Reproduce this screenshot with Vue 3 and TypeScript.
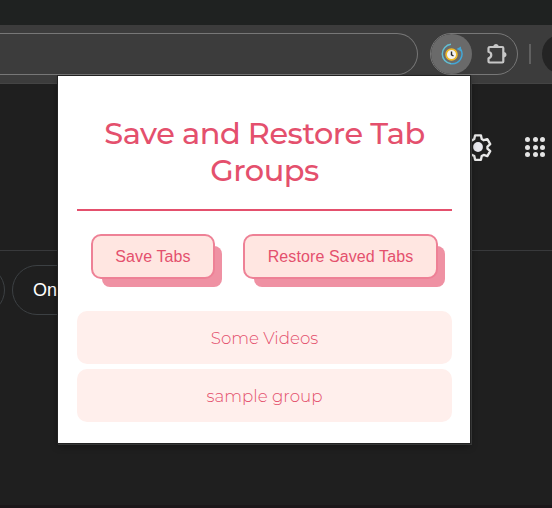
<script setup lang="ts">
import { ref } from 'vue'

const titleLines = ['Save and Restore Tab', 'Groups']
const groups = ref<string[]>(['Some Videos', 'sample group'])
const dots = [0, 1, 2, 3, 4, 5, 6, 7, 8]
</script>

<template>
  <div class="browser">
    <div class="tab-strip"></div>
    <div class="toolbar">
      <div class="address"></div>
      <div class="extensions">
        <div class="ext-active">
          <svg width="24" height="24" viewBox="0 0 24 24">
            <path d="M11 2.300A9.700 9.700 0 0 0 2.300 12C2.300 17 6 21 11 21.700" fill="none" stroke="#62bfd3" stroke-width="1.500" />
            <path d="M11 21.700A9.700 9.700 0 0 0 20.500 7" fill="none" stroke="#43a7d6" stroke-width="1.500" />
            <path d="M16.500 7l4.500-2.600v4.800z" fill="#43a7d6" />
            <circle cx="11.500" cy="12.500" r="5.400" fill="#f3f3f3" stroke="#edb928" stroke-width="1.700" />
            <path d="M11.500 9.500v3.300l2 1.200" fill="none" stroke="#252525" stroke-width="1.400" />
          </svg>
        </div>
        <svg class="puzzle" width="24" height="24" viewBox="0 0 24 24">
          <path d="M5 5H17.300Q18.300 5 18.300 6V19.500Q18.300 20.500 17.300 20.500H4.500Q3.500 20.500 3.500 19.500V16.200C7.200 15.200 7.200 10.800 3.500 9.800V6Q3.500 5 5 5Z" fill="none" stroke="#c7c7c7" stroke-width="2.200" stroke-linejoin="round" />
          <path d="M8.300 4.500C8.300 1 13.700 1 13.700 4.500M18.500 10C22.500 10 22.500 15.400 18.500 15.400" fill="#c7c7c7" />
        </svg>
      </div>
      <div class="divider"></div>
      <div class="avatar"></div>
    </div>
    <div class="page">
      <div class="page-head">
        <svg class="gear" width="28" height="28" viewBox="0 0 24 24">
          <path d="M9.500 2h5l.7 3.200 1.700 1 3.100-1 2.500 4.300-2.400 2.100v1.800l2.400 2.100-2.500 4.300-3.100-1-1.700 1-.7 3.200h-5l-.7-3.200-1.700-1-3.100 1-2.500-4.300 2.400-2.100v-1.800L1.500 9.500 4 5.200l3.100 1 1.700-1z" fill="none" stroke="#e8e8e8" stroke-width="2" stroke-linejoin="round" />
          <circle cx="12" cy="12" r="4.200" fill="#e8e8ee" />
        </svg>
        <div class="apps"><i v-for="d in dots" :key="d"></i></div>
      </div>
      <div class="chips">
        <div class="chip previous"></div>
        <div class="chip">On</div>
      </div>
    </div>
    <main class="popup">
      <h1><span v-for="line in titleLines" :key="line">{{ line }}</span></h1>
      <div class="actions">
        <button class="save">Save Tabs</button>
        <button class="restore">Restore Saved Tabs</button>
      </div>
      <ul>
        <li v-for="group in groups" :key="group">{{ group }}</li>
      </ul>
    </main>
  </div>
</template>

<style>
body { margin: 0; background: #1f1f1f; }
</style>

<style scoped>
* { box-sizing: border-box; }
.browser { position: relative; width: 552px; height: 508px; overflow: hidden; background: #1f1f1f; display: flex; flex-direction: column; }
.tab-strip { height: 25px; flex: none; background: #1f2221; }
.toolbar { height: 59px; flex: none; padding-top: 8px; background: #3c3c3c; border-bottom: 1px solid #444; display: flex; align-items: flex-start; }
.address { width: 418px; height: 42px; flex: none; border: 1px solid #777; border-left: 0; border-radius: 0 21px 21px 0; }
.extensions { width: 88px; height: 42px; margin-left: 12px; flex: none; border: 1px solid #777; border-radius: 21px; display: flex; align-items: center; overflow: hidden; }
.ext-active { width: 41px; height: 40px; flex: none; border-radius: 20px; background: #6a6a6a; display: flex; align-items: center; justify-content: center; }
.puzzle { margin-left: 13px; margin-top: -1px; }
.divider { width: 2px; height: 20px; flex: none; margin: 11px 0 0 11px; background: #606060; }
.avatar { width: 40px; height: 40px; flex: none; margin: 1px 0 0 11px; border-radius: 50%; background: #242424; }
.page { flex: 1; border-bottom: 3px solid #1b1719; }
.page-head { height: 167px; border-bottom: 1px solid #38393b; padding: 49px 0 0 464px; display: flex; align-items: flex-start; gap: 33px; }
.gear { flex: none; }
.apps { display: grid; flex: none; grid-template-columns: repeat(3, 5px); gap: 2.5px; margin-top: 4px; }
.apps i { width: 5px; height: 5px; border-radius: 50%; background: #e4e4e4; }
.chips { display: flex; gap: 7px; padding-top: 14px; margin-left: -75px; }
.chip { width: 130px; height: 50px; border: 1px solid #3c4043; border-radius: 25px; padding-left: 20px; font: 18px/48px "Liberation Sans", Arial, sans-serif; color: #fff; }
.chip.previous { width: 80px; }
.popup { position: absolute; left: 58px; top: 76px; width: 412px; height: 367px; padding: 39px 18px 0 19px; background: #fff; box-shadow: 0 0 0 1px #222, 1px 1px 0 1px #363737, 0 3px 7px #0006; color: #e4506d; }
h1 { margin: 0; height: 96px; border-bottom: 2px solid #e4506d; font: 500 30.4px/37px Montserrat, Inter, sans-serif; letter-spacing: -0.47px; text-align: center; }
h1 span { display: block; white-space: nowrap; }
.actions { display: flex; gap: 28px; padding: 23px 0 0 14px; }
button { height: 45px; flex: none; padding: 0; border: 2px solid #ee8196; border-radius: 10px; background: #ffe6e1; color: #e4506d; font: 16px "Liberation Sans", Arial, sans-serif; letter-spacing: 0.1px; box-shadow: 9px 10px 0 -2px #ef91a3; }
.save { width: 124px; }
.restore { width: 195px; }
ul { list-style: none; display: flex; flex-direction: column; gap: 5px; margin: 32px 0 0; padding: 0; }
li { height: 53px; border-radius: 10px; background: #ffefec; text-align: center; font: 300 16.7px/55px Montserrat, Inter, sans-serif; }
</style>
